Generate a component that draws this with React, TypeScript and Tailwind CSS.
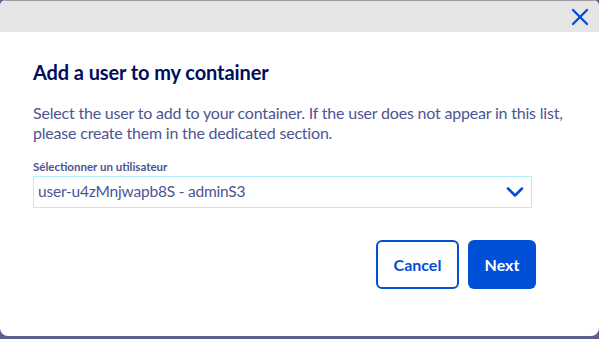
import React from 'react';
import { X, ChevronDown } from 'lucide-react';

const App: React.FC = () => {
  return (
    <div className="h-[339px] w-[599px] bg-[#5d5f8e] font-['Lato','Open_Sans',sans-serif]">
      <div className="flex h-[336px] flex-col overflow-hidden rounded-t-md rounded-b-lg bg-white">
        {/* Header */}
        <div className="flex h-8 shrink-0 items-center justify-end border-t border-[#9a9a9a] bg-[#e5e5e5] pr-[5px]">
          <button aria-label="Close" className="text-[#0050d7]">
            <X size={28} strokeWidth={2} />
          </button>
        </div>

        {/* Body */}
        <div className="flex flex-col px-[33px]">
          <h2 className="mt-[28px] text-[20px] font-bold leading-6 tracking-[-0.1px] text-[#000e5c]">
            Add a user to my container
          </h2>
          <p className="mt-[19px] text-[16px] leading-5 tracking-[-0.2px] text-[#4d5592]">
            Select the user to add to your container. If the user does not appear in this list,
            <br />
            please create them in the dedicated section.
          </p>

          <label className="mt-[16px] text-[11.5px] font-bold leading-4 text-[#4d5592]">
            Sélectionner un utilisateur
          </label>
          <div className="mt-[1px] flex h-[32px] w-[499px] items-center justify-between border border-[#b3ecfb] pl-[4px] pr-[2px]">
            <span className="text-[15.5px] tracking-[-0.2px] text-[#4d5592]">user-u4zMnjwapb8S - adminS3</span>
            <ChevronDown size={28} strokeWidth={2.2} className="text-[#0050d7]" />
          </div>

          <div className="mt-[32px] flex justify-end gap-[9px] pr-[30px]">
            <button className="h-[49px] w-[83px] rounded-md border-2 border-[#0050d7] bg-white text-[16px] font-bold text-[#0050d7]">
              Cancel
            </button>
            <button className="h-[49px] w-[68px] rounded-md bg-[#0050d7] text-[16px] font-bold text-white">
              Next
            </button>
          </div>
        </div>
      </div>
    </div>
  );
};

export default App;
